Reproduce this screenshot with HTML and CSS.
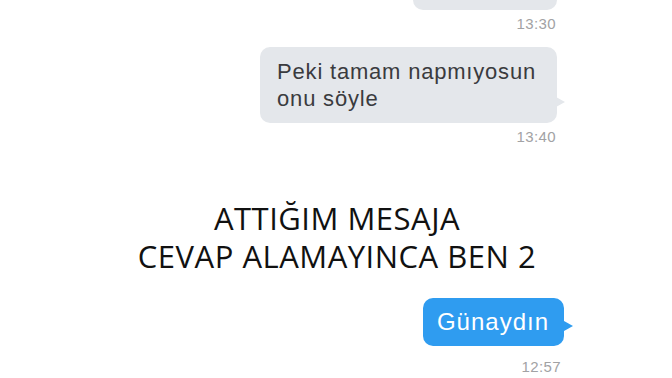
FILE: index.html
```html
<!DOCTYPE html>
<html lang="tr">
<head>
<meta charset="utf-8">
<link rel="stylesheet" href="styles.css">
</head>
<body>
<main class="chat">
  <div class="msg msg-gray msg-first">
    <div class="bubble bubble-gray bubble-cut"></div>
    <div class="time">13:30</div>
  </div>
  <div class="msg msg-gray msg-second">
    <div class="bubble bubble-gray bubble-tail">Peki tamam napmıyosun<br>onu söyle</div>
    <div class="time">13:40</div>
  </div>
  <h1 class="caption">ATTIĞIM MESAJA<br>CEVAP ALAMAYINCA BEN 2</h1>
  <div class="msg msg-blue">
    <div class="bubble bubble-blue bubble-tail">Günaydın</div>
    <div class="time">12:57</div>
  </div>
</main>
</body>
</html>
```
FILE: styles.css
```css
html, body {
  margin: 0;
  padding: 0;
  background: #ffffff;
}
body {
  width: 672px;
  height: 378px;
  overflow: hidden;
}
.chat {
  display: flex;
  flex-direction: column;
}
.msg {
  display: flex;
  flex-direction: column;
  align-items: flex-end;
}
.msg-gray {
  padding-right: 115px;
}
.msg-blue {
  padding-right: 108px;
  margin-top: 23px;
}
.msg-second {
  margin-top: 15px;
}
.bubble {
  position: relative;
  font-family: "Liberation Sans", Arial, sans-serif;
  border-radius: 10px;
}
.bubble-gray {
  background: #e4e7eb;
  color: #3a3b3e;
  font-size: 22px;
  line-height: 27px;
  letter-spacing: 0.8px;
  padding: 11px 21px 11px 17px;
}
.bubble-cut {
  margin-top: -34px;
  width: 144px;
  height: 44px;
  padding: 0;
}
.bubble-blue {
  background: #2f9cf0;
  color: #ffffff;
  font-size: 24px;
  line-height: 28px;
  letter-spacing: 1px;
  padding: 10px 15px 10px 14px;
}
.bubble-tail::after {
  content: "";
  position: absolute;
  right: -8px;
  bottom: 16px;
  width: 0;
  height: 0;
  border-top: 5px solid transparent;
  border-bottom: 5px solid transparent;
  border-left: 9px solid #e4e7eb;
}
.bubble-blue.bubble-tail::after {
  border-left-color: #2f9cf0;
  right: -9px;
  bottom: 15px;
}
.time {
  font-family: "Liberation Sans", Arial, sans-serif;
  font-size: 15px;
  line-height: 17px;
  letter-spacing: 0.4px;
  color: #a2a2a4;
  margin-top: 5px;
  padding-right: 1px;
}
.msg-blue .time {
  margin-top: 12px;
  padding-right: 3px;
}
.caption {
  margin: 54px 0 0 0;
  font-family: "Open Sans", "Noto Sans", sans-serif;
  font-weight: 500;
  font-size: 31px;
  line-height: 38px;
  letter-spacing: 0.5px;
  color: #111111;
  text-align: center;
  padding-left: 2px;
}
```
